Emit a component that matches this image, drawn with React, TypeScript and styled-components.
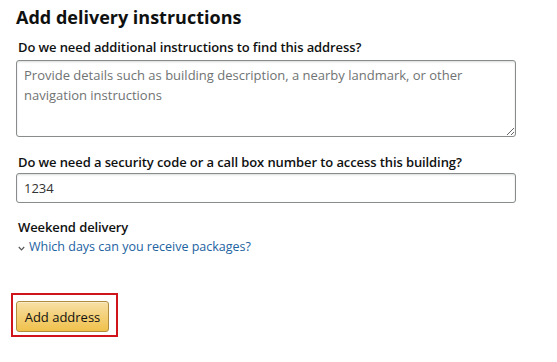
import React from "react";
import styled, { createGlobalStyle } from "styled-components";

const Global = createGlobalStyle`
  html, body { margin: 0; padding: 0; background: #fff; }
  body { font-family: "Open Sans", "Noto Sans", Arial, sans-serif; color: #0f1111; }
`;

const Page = styled.div`
  width: 557px;
  height: 362px;
  padding: 5px 0 0 16px;
  box-sizing: border-box;
  display: flex;
  flex-direction: column;
`;

const Heading = styled.h2`
  margin: 0;
  font-size: 18px;
  font-weight: 700;
  line-height: 24px;
  color: #0f1111;
`;

const Field = styled.div<{ $top: number }>`
  margin-top: ${(p) => p.$top}px;
  display: flex;
  flex-direction: column;
`;

const Label = styled.label<{ $gap: number }>`
  font-size: 13px;
  font-weight: 600;
  line-height: 18px;
  padding-left: 2px;
  margin-bottom: ${(p) => p.$gap}px;
  letter-spacing: -0.1px;
`;

const TextArea = styled.textarea`
  width: 500px;
  height: 77px;
  box-sizing: border-box;
  border: 1px solid #888c8c;
  border-radius: 3px;
  padding: 4px 7px;
  font-family: inherit;
  font-size: 13px;
  line-height: 20px;
  color: #0f1111;
  resize: vertical;
  box-shadow: 0 1px 2px rgba(15, 17, 17, 0.15) inset;
  &::placeholder { color: #6f7373; }
`;

const Input = styled.input`
  width: 500px;
  height: 30px;
  box-sizing: border-box;
  border: 1px solid #888c8c;
  border-radius: 3px;
  padding: 0 7px;
  font-family: inherit;
  font-size: 13px;
  color: #333;
  box-shadow: 0 1px 2px rgba(15, 17, 17, 0.15) inset;
`;

const SubTitle = styled.div`
  font-size: 13px;
  font-weight: 600;
  line-height: 18px;
  padding-left: 2px;
  letter-spacing: -0.1px;
`;

const Expander = styled.a`
  display: flex;
  align-items: center;
  gap: 4px;
  margin-top: 2px;
  padding-left: 2px;
  font-size: 12.5px;
  line-height: 18px;
  color: #2162a1;
  text-decoration: none;
  cursor: pointer;
`;

const Chevron = styled.svg`
  width: 7px;
  height: 5px;
  margin-top: 2px;
`;

const Highlight = styled.div`
  margin-top: 37px;
  margin-left: -5px;
  width: 107px;
  height: 44px;
  box-sizing: border-box;
  border: 2px solid #d0141b;
  padding: 6px 0 0 3px;
`;

const Button = styled.button`
  width: 93px;
  height: 31px;
  box-sizing: border-box;
  border: 1px solid #b08c3e;
  border-radius: 3px;
  background: linear-gradient(to bottom, #f7dfa5, #f0c14b);
  box-shadow: 0 1px 0 rgba(255, 255, 255, 0.4) inset;
  font-family: inherit;
  font-size: 13px;
  color: #111;
  padding: 0;
  cursor: pointer;
`;

export default function App() {
  return (
    <>
      <Global />
      <Page>
        <Heading>Add delivery instructions</Heading>
        <Field $top={9}>
          <Label $gap={4}>Do we need additional instructions to find this address?</Label>
          <TextArea placeholder="Provide details such as building description, a nearby landmark, or other navigation instructions" />
        </Field>
        <Field $top={16}>
          <Label $gap={2}>Do we need a security code or a call box number to access this building?</Label>
          <Input defaultValue="1234" />
        </Field>
        <Field $top={15}>
          <SubTitle>Weekend delivery</SubTitle>
          <Expander>
            <Chevron viewBox="0 0 7 5">
              <path d="M0.8 1 L3.5 3.8 L6.2 1" fill="none" stroke="#555" strokeWidth="1.2" />
            </Chevron>
            Which days can you receive packages?
          </Expander>
        </Field>
        <Highlight>
          <Button>Add address</Button>
        </Highlight>
      </Page>
    </>
  );
}
